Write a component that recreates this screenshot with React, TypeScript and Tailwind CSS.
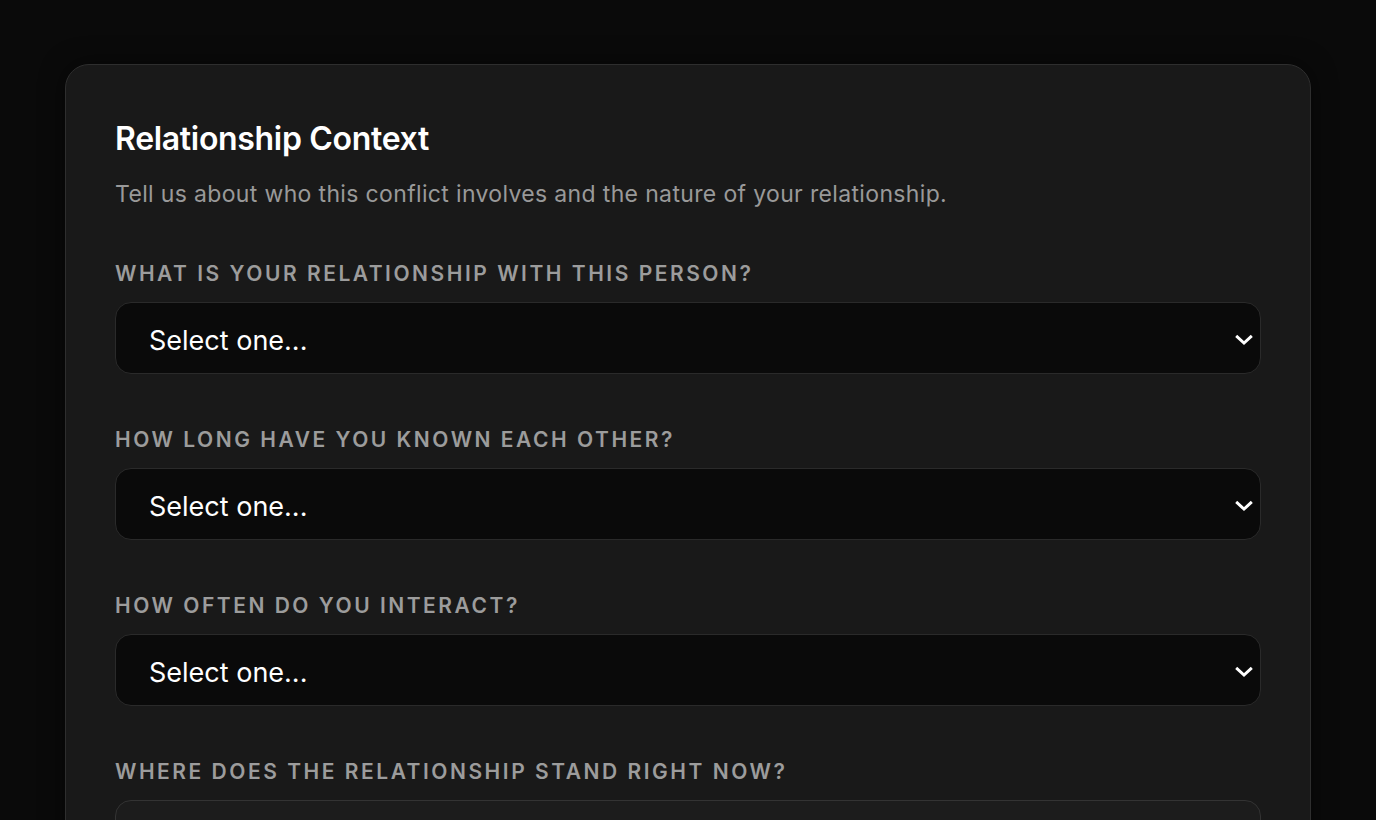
// Relationship Context step – dark card with stacked select fields.

const FIELDS = [
  { id: "relationship", label: "What is your relationship with this person?" },
  { id: "duration", label: "How long have you known each other?" },
  { id: "frequency", label: "How often do you interact?" },
  { id: "status", label: "Where does the relationship stand right now?" },
];

function Chevron() {
  return (
    <svg
      viewBox="0 0 20 12"
      className="pointer-events-none absolute right-[8px] top-[calc(50%+2px)] h-[11px] w-[18px] -translate-y-1/2"
      fill="none"
      aria-hidden
    >
      <path
        d="M2.5 2.5L10 9.5L17.5 2.5"
        stroke="white"
        strokeWidth={3.2}
        strokeLinecap="square"
        strokeLinejoin="miter"
      />
    </svg>
  );
}

function SelectField({ id, label, last }: { id: string; label: string; last?: boolean }) {
  return (
    <div className="flex flex-col">
      <label
        htmlFor={id}
        className="text-[21px] font-semibold uppercase leading-[28px] tracking-[0.12em] text-[#9c9c9c]"
      >
        {label}
      </label>
      <div className="relative mt-[14px]">
        <select
          id={id}
          defaultValue=""
          className={
            last
              ? "h-[72px] w-full appearance-none rounded-2xl border border-[#333] bg-[#1c1c1c] pl-[33px] pt-[6px] text-[27px] text-white outline-none"
              : "h-[72px] w-full appearance-none rounded-2xl border border-[#2a2a2a] bg-[#0a0a0a] pl-[33px] pt-[6px] text-[27px] text-white outline-none"
          }
        >
          <option value="">Select one...</option>
        </select>
        {!last && <Chevron />}
      </div>
    </div>
  );
}

export default function App() {
  return (
    <div
      className="min-h-screen bg-[#0a0a0a] px-[65px] pt-[64px]"
      style={{ fontFamily: "Inter, 'Noto Sans', sans-serif" }}
    >
      <section className="rounded-[24px] border border-[#2e2e2e] bg-[#191919] px-[49px] pt-[51px] pb-12 shadow-[0_0_24px_rgba(0,0,0,0.5)]">
        <h2 className="text-[32px] font-semibold leading-[46px] tracking-[-0.01em] text-white">
          Relationship Context
        </h2>
        <p className="mt-[15px] text-[23px] leading-[34px] tracking-[0.015em] text-[#999]">
          Tell us about who this conflict involves and the nature of your relationship.
        </p>

        <div className="mt-[49px] flex flex-col gap-[52px]">
          {FIELDS.map((f, i) => (
            <SelectField key={f.id} id={f.id} label={f.label} last={i === FIELDS.length - 1} />
          ))}
        </div>
      </section>
    </div>
  );
}
